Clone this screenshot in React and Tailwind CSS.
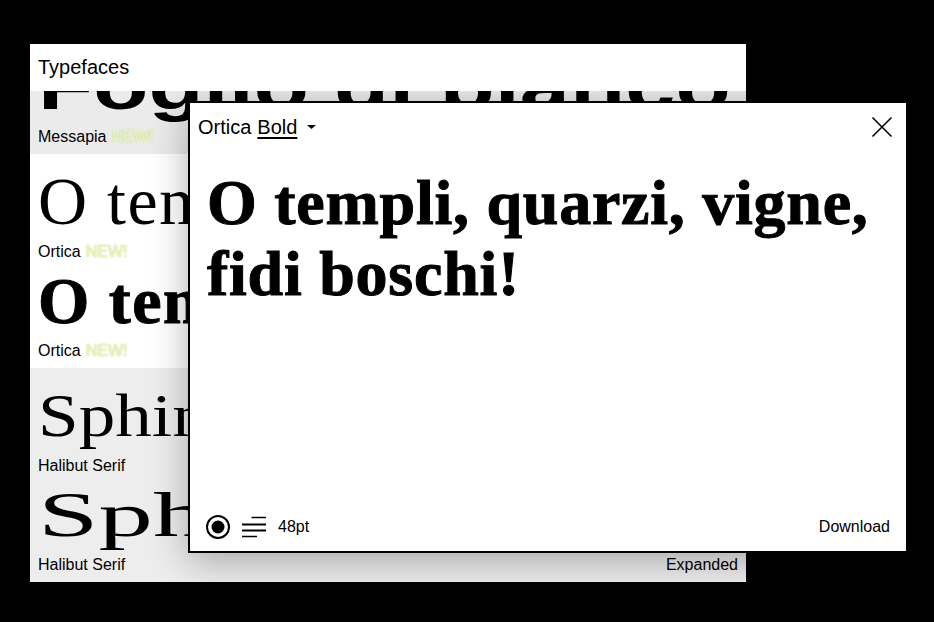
const SANS = "font-['Liberation_Sans',Arial,sans-serif]"

function NewBadge() {
  return (
    <span className="ml-[5px] text-[#edf4c4] [text-shadow:0_0_2px_#bcd466]">NEW!</span>
  )
}

function Specimen({ text, textClass, name, isNew, right }) {
  return (
    <div className="h-[99px] overflow-hidden">
      <div className={`h-[76px] whitespace-nowrap ${textClass}`}>{text}</div>
      <div className="flex h-[23px] items-center justify-between text-[16px] leading-[23px] text-black">
        <div>
          {name}
          {isNew ? <NewBadge /> : null}
        </div>
        {right ? <div>{right}</div> : null}
      </div>
    </div>
  )
}

function TypefaceList() {
  return (
    <div className="ml-[30px] h-[538px] w-[716px] overflow-hidden bg-white">
      <div className="relative z-30 h-[47px] bg-white pl-[8px] pt-[10px] text-[20px] leading-[26px] text-black">
        Typefaces
      </div>
      <div className="-mt-[52px]">
        <div className="bg-[#ebebeb] px-[8px] pb-[6px] pt-[10px]">
          <Specimen
            text="Foglio di bianco"
            textClass={`origin-left scale-x-[1.39] ${SANS} text-[65px] font-bold leading-[75px]`}
            name="Messapia"
            isNew
          />
        </div>
        <div className="bg-white px-[8px] pb-[6px] pt-[10px]">
          <Specimen
            text="O templi, quarzi, vigne, fidi boschi!"
            textClass="font-['Liberation_Serif',serif] text-[68px] leading-[75px] tracking-[1.5px]"
            name="Ortica"
            isNew
          />
          <Specimen
            text="O templi, quarzi, vigne, fidi boschi!"
            textClass="font-['Liberation_Serif',serif] text-[66px] font-bold leading-[75px] tracking-[1.5px] [-webkit-text-stroke:1px_black]"
            name="Ortica"
            isNew
          />
        </div>
        <div className="bg-[#ededed] px-[8px] pb-[6px] pt-[10px]">
          <Specimen
            text="Sphinx of black quartz"
            textClass="origin-left scale-x-[1.18] font-['Liberation_Serif',serif] text-[62px] leading-[75px]"
            name="Halibut Serif"
          />
          <Specimen
            text="Sphinx of black quartz"
            textClass="origin-left scale-x-[1.7] font-['Liberation_Serif',serif] text-[64px] leading-[75px]"
            name="Halibut Serif"
            right="Expanded"
          />
        </div>
      </div>
    </div>
  )
}

function FontModal() {
  return (
    <div className="absolute left-[188px] top-[101px] z-20 flex h-[452px] w-[720px] flex-col border-2 border-black bg-white shadow-[0_8px_36px_rgba(0,0,0,0.3)]">
      <div className="flex h-[47px] items-center justify-between pl-[8px] pr-[13px] text-[20px] text-black">
        <div className="flex items-center">
          <span>Ortica</span>
          <span className="ml-[6px] underline decoration-[1.5px] underline-offset-[3px]">Bold</span>
          <svg className="ml-[9px]" width="11" height="6" viewBox="0 0 11 6">
            <path d="M1 1h9L5.5 5z" fill="black" />
          </svg>
        </div>
        <svg width="22" height="22" viewBox="0 0 22 22" fill="none" stroke="black" strokeWidth="1.6">
          <path d="M1.5 1.5l19 19M20.5 1.5l-19 19" />
        </svg>
      </div>
      <div className="mt-[17px] flex-1 pl-[17px] pr-[16px] font-['Liberation_Serif',serif] text-[64px] font-bold leading-[71px] tracking-[0.75px] text-black [-webkit-text-stroke:1px_black]">
        O templi, quarzi, vigne, fidi boschi!
      </div>
      <div className="mb-[12px] flex h-[24px] items-center justify-between px-[16px] text-[16px] text-black">
        <div className="flex items-center">
          <svg width="24" height="24" viewBox="0 0 24 24">
            <circle cx="12" cy="12" r="11" fill="none" stroke="black" strokeWidth="2" />
            <circle cx="12" cy="12" r="6.5" fill="black" />
          </svg>
          <svg className="ml-[12px]" width="24" height="24" viewBox="0 0 24 24" stroke="black">
            <path d="M9.5 2.5H24" strokeWidth="1.5" />
            <path d="M0 9.5h24" strokeWidth="2" />
            <path d="M0 15.5h24" strokeWidth="2" />
            <path d="M0 21.5h15" strokeWidth="1.5" />
          </svg>
          <span className="ml-[12px]">48pt</span>
        </div>
        <div>Download</div>
      </div>
    </div>
  )
}

export default function App() {
  return (
    <div className={`relative h-[622px] w-[934px] overflow-hidden bg-black pt-[44px] ${SANS}`}>
      <TypefaceList />
      <FontModal />
    </div>
  )
}
